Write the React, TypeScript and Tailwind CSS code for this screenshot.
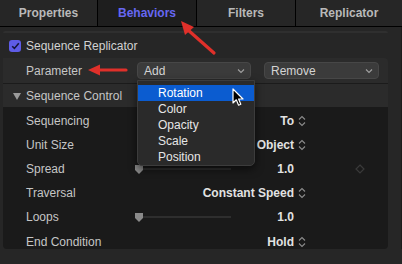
import React from "react";

const UpDown = () => (
  <svg width="8" height="12" viewBox="0 0 8 12" className="ml-[4px] shrink-0">
    <path d="M1 4.5 L4 1.5 L7 4.5 M1 7.5 L4 10.5 L7 7.5" fill="none" stroke="#8c8c8c" strokeWidth="1.1" />
  </svg>
);

const Chevron = () => (
  <svg width="8" height="6" viewBox="0 0 8 6">
    <path d="M1 1.5 L4 4.5 L7 1.5" fill="none" stroke="#a0a0a0" strokeWidth="1.1" />
  </svg>
);

const Thumb = () => (
  <svg width="8" height="9" viewBox="0 0 8 9">
    <path d="M0 0 H8 V5 L4 9 L0 5 Z" fill="#8a8a8a" />
  </svg>
);

type RowProps = { label: string; value: string; updown?: boolean; slider?: boolean; diamond?: boolean; last?: boolean };

const Row = ({ label, value, updown, slider, diamond, last }: RowProps) => (
  <div className={`flex ${last ? "h-[20px] items-start pt-[4px]" : "h-[24px] items-center"} pl-[23px]`}>
    <div className="w-[109px] text-[12px] text-[#c6c6c6] whitespace-nowrap">{label}</div>
    <div className="w-[100px] h-full flex items-center">
      {slider && (
        <div className="flex items-center">
          <Thumb />
          <div className="w-[88px] h-[2px] bg-[#2e2e2e]" />
        </div>
      )}
    </div>
    <div className="w-[71px] flex justify-end items-center text-[12px] font-bold text-[#e2e2e2] whitespace-nowrap">
      <span>{value}</span>
      {updown ? <UpDown /> : <span className="w-[12px] shrink-0" />}
    </div>
    <div className="ml-[49px] w-[10px] h-[10px] flex items-center justify-center">
      {diamond && (
        <svg width="10" height="10" viewBox="0 0 10 10">
          <path d="M5 1 L9 5 L5 9 L1 5 Z" fill="none" stroke="#3a3a3a" strokeWidth="1.2" />
        </svg>
      )}
    </div>
  </div>
);

export default function App() {
  const tabs = [
    { name: "Properties", w: "w-[98px]", active: false },
    { name: "Behaviors", w: "w-[99px]", active: true },
    { name: "Filters", w: "w-[99px]", active: false },
    { name: "Replicator", w: "w-[106px]", active: false },
  ];
  return (
    <div
      className="relative w-[402px] h-[264px] overflow-hidden bg-[#262626]"
      style={{ fontFamily: '"Liberation Sans", Arial, sans-serif' }}
    >
      {/* Tab bar */}
      <div className="flex h-[27px] border-b border-black">
        {tabs.map((t, i) => (
          <div
            key={t.name}
            className={`${t.w} flex items-center justify-center text-[12px] font-bold ${
              i < tabs.length - 1 ? "border-r border-black" : ""
            } ${t.active ? "bg-[#1e1e1e] text-[#6767f2]" : "bg-[#262626] text-[#b9b9b9]"}`}
          >
            {t.name}
          </div>
        ))}
      </div>

      <div className="flex">
        <div className="w-[388px] pl-[3px] flex flex-col">
          <div className="mt-[4px] h-[2px] bg-[#2f2f2f] rounded-t-[2px]" />
          {/* checkbox row */}
          <div className="h-[25px] flex items-center pl-[6px]">
            <div className="w-[12px] h-[12px] rounded-[3px] bg-[#5e5ce6] flex items-center justify-center">
              <svg width="9" height="8" viewBox="0 0 9 8">
                <path d="M1.2 4.2 L3.4 6.4 L7.8 1.2" fill="none" stroke="#15153a" strokeWidth="1.6" />
              </svg>
            </div>
            <span className="ml-[5px] text-[12px] text-[#d2d2d2]">Sequence Replicator</span>
          </div>
          {/* Parameter row */}
          <div className="h-[26px] bg-[#2b2b2b] rounded-tr-[4px] flex items-center border-b border-[#1b1b1b]">
            <div className="w-[134px] pl-[23px] text-[12px] text-[#c6c6c6]">Parameter</div>
            <div className="w-[114px] h-[17px] rounded-[4px] bg-[#3b3b3b] border border-[#474747] flex items-center justify-between pl-[6px] pr-[5px] text-[12px] text-[#d4d4d4]">
              <span>Add</span>
              <Chevron />
            </div>
            <div className="ml-[13px] w-[115px] h-[17px] rounded-[4px] bg-[#3b3b3b] border border-[#474747] flex items-center justify-between pl-[6px] pr-[5px] text-[12px] text-[#d4d4d4]">
              <span>Remove</span>
              <Chevron />
            </div>
          </div>
          {/* Sequence Control */}
          <div className="h-[23px] bg-[#2b2b2b] flex items-center pl-[10px] pt-[1px]">
            <svg width="8" height="7" viewBox="0 0 8 7">
              <path d="M0 0 H8 L4 7 Z" fill="#9a9a9a" />
            </svg>
            <span className="ml-[5px] text-[12px] text-[#c6c6c6]">Sequence Control</span>
          </div>
          {/* Dark panel */}
          <div className="bg-[#1a1a1a] rounded-b-[4px] pt-[2px]">
            <Row label="Sequencing" value="To" updown />
            <Row label="Unit Size" value="Object" updown />
            <Row label="Spread" value="1.0" slider diamond />
            <Row label="Traversal" value="Constant Speed" updown />
            <Row label="Loops" value="1.0" slider />
            <Row label="End Condition" value="Hold" updown last />
          </div>
        </div>
        <div className="w-[13px] bg-[#262626]" />
        <div className="w-[1px] bg-[#1c1c1c]" />
      </div>

      {/* Dropdown menu */}
      <div className="absolute left-[137px] top-[80px] w-[118px] h-[86px] bg-[#2a2a2a] border border-[#3c3c3c] rounded-b-[5px] shadow-[0_3px_8px_rgba(0,0,0,0.6)] pt-[4px]">
        {["Rotation", "Color", "Opacity", "Scale", "Position"].map((m, i) => (
          <div
            key={m}
            className={`h-[16px] flex items-center pl-[20px] text-[12px] ${
              i === 0 ? "bg-[#0b5cd0] text-white" : "text-[#e6e6e6]"
            }`}
          >
            {m}
          </div>
        ))}
      </div>

      {/* Cursor */}
      <svg className="absolute left-[232px] top-[88px]" width="13" height="19" viewBox="0 0 13 19">
        <path d="M1 1 L1 15 L4.3 11.8 L6.6 17.2 L8.8 16.2 L6.6 11 L11 11 Z" fill="#000" stroke="#fff" strokeWidth="1.2" strokeLinejoin="round" />
      </svg>

      {/* Red arrows */}
      <svg className="absolute left-0 top-0" width="402" height="264" viewBox="0 0 402 264">
        <line x1="214" y1="53" x2="188" y2="30" stroke="#e0302a" strokeWidth="3.2" strokeLinecap="round" />
        <path d="M181 21 L194 27 L185 35 Z" fill="#e0302a" />
        <line x1="126" y1="70" x2="98" y2="70" stroke="#e0302a" strokeWidth="3.2" strokeLinecap="round" />
        <path d="M88 70 L100 64.5 L100 75.5 Z" fill="#e0302a" />
      </svg>
    </div>
  );
}
